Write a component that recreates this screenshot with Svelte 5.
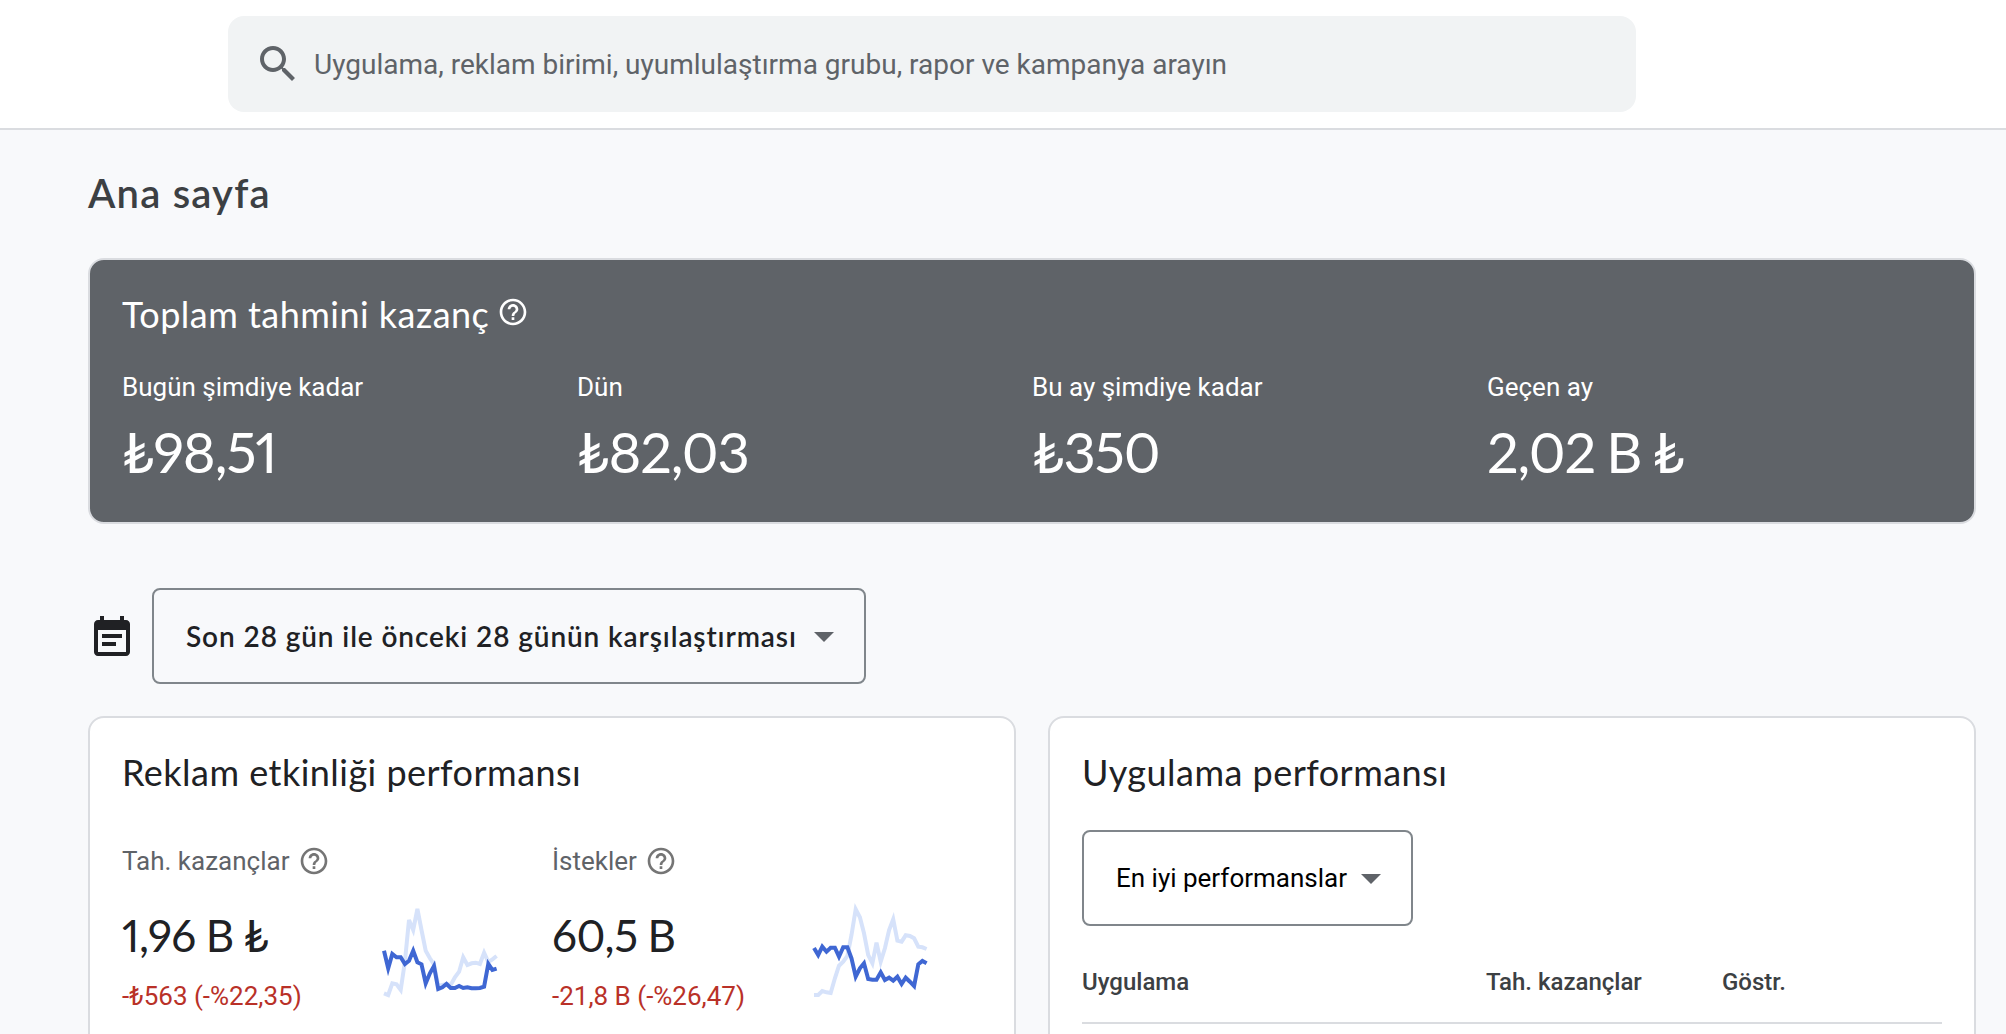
<script lang="ts">
  interface Metric {
    label: string
    value: string
    delta: string
    current: number[]
    previous: number[]
  }

  const totals = [
    { label: 'Bugün şimdiye kadar', value: '₺98,51' },
    { label: 'Dün', value: '₺82,03' },
    { label: 'Bu ay şimdiye kadar', value: '₺350' },
    { label: 'Geçen ay', value: '2,02 B ₺' },
  ]

  const metrics: Metric[] = [
    {
      label: 'Tah. kazançlar',
      value: '1,96 B ₺',
      delta: '-₺563 (-%22,35)',
      current: [138, 85, 128, 118, 118, 98, 108, 138, 103, 97, 40, 70, 92, 23, 28, 38, 26, 26, 32, 26, 28, 25, 25, 26, 30, 98, 80, 84],
      previous: [10, 5, 40, 37, 20, 105, 230, 200, 263, 200, 138, 115, 97, 32, 35, 38, 35, 58, 75, 118, 95, 100, 102, 98, 132, 104, 112, 122],
    },
    {
      label: 'İstekler',
      value: '60,5 B',
      delta: '-21,8 B (-%26,47)',
      current: [146, 125, 150, 135, 147, 147, 120, 148, 148, 115, 60, 85, 100, 53, 51, 51, 73, 50, 57, 48, 60, 38, 57, 45, 32, 97, 107, 100],
      previous: [5, 5, 17, 13, 11, 55, 93, 105, 122, 185, 262, 238, 190, 125, 100, 162, 105, 145, 200, 232, 168, 165, 184, 182, 175, 150, 148, 143],
    },
  ]

  const columns = ['Uygulama', 'Tah. kazançlar', 'Göstr.']

  function points(values: number[]): string {
    return values.map((v, i) => `${(2 + i * 4.17).toFixed(1)},${((290 - v) / 3).toFixed(1)}`).join(' ')
  }
</script>

{#snippet help()}
  <svg class="help" viewBox="0 0 24 24" aria-hidden="true">
    <path d="M11 18h2v-2h-2v2zm1-16C6.48 2 2 6.48 2 12s4.48 10 10 10 10-4.48 10-10S17.52 2 12 2zm0 18c-4.41 0-8-3.59-8-8s3.59-8 8-8 8 3.59 8 8-3.59 8-8 8zm0-14c-2.21 0-4 1.79-4 4h2c0-1.1.9-2 2-2s2 .9 2 2c0 2-3 1.75-3 5h2c0-2.25 3-2.5 3-5 0-2.21-1.79-4-4-4z" />
  </svg>
{/snippet}

{#snippet arrow()}
  <svg class="arrow" viewBox="0 0 24 24" aria-hidden="true"><path d="M7 10l5 5 5-5z" /></svg>
{/snippet}

<div class="page">
  <header>
    <div class="search">
      <svg viewBox="0 0 24 24" aria-hidden="true">
        <path d="M15.5 14h-.79l-.28-.27C15.41 12.59 16 11.11 16 9.5 16 5.91 13.09 3 9.5 3S3 5.91 3 9.5 5.91 16 9.5 16c1.61 0 3.09-.59 4.23-1.57l.27.28v.79l5 4.99L20.49 19l-4.99-5zm-6 0C7.01 14 5 11.99 5 9.5S7.01 5 9.5 5 14 7.01 14 9.5 11.99 14 9.5 14z" />
      </svg>
      <span>Uygulama, reklam birimi, uyumlulaştırma grubu, rapor ve kampanya arayın</span>
    </div>
  </header>

  <main>
    <h1>Ana sayfa</h1>

    <section class="totals">
      <h2><span>Toplam tahmini kazanç</span>{@render help()}</h2>
      <div class="totals-grid">
        {#each totals as total}
          <div>
            <div class="total-label">{total.label}</div>
            <div class="total-value">{total.value}</div>
          </div>
        {/each}
      </div>
    </section>

    <div class="range">
      <svg class="calendar" viewBox="0 0 24 24" aria-hidden="true">
        <path d="M17 10H7v2h10v-2zm2-7h-1V1h-2v2H8V1H6v2H5c-1.11 0-1.99.9-1.99 2L3 19c0 1.1.89 2 2 2h14c1.1 0 2-.9 2-2V5c0-1.1-.9-2-2-2zm0 16H5V8h14v11zm-5-5H7v2h7v-2z" />
      </svg>
      <button class="select range-select">
        <span>Son 28 gün ile önceki 28 günün karşılaştırması</span>{@render arrow()}
      </button>
    </div>

    <div class="cards">
      <section class="card">
        <h2>Reklam etkinliği performansı</h2>
        <div class="metrics">
          {#each metrics as metric}
            <div class="metric">
              <div class="metric-label"><span>{metric.label}</span>{@render help()}</div>
              <div class="metric-body">
                <div>
                  <div class="metric-value">{metric.value}</div>
                  <div class="metric-delta">{metric.delta}</div>
                </div>
                <svg class="spark" viewBox="0 0 118 100" aria-hidden="true">
                  <polyline class="previous" points={points(metric.previous)} />
                  <polyline class="current" points={points(metric.current)} />
                </svg>
              </div>
            </div>
          {/each}
        </div>
      </section>

      <section class="card">
        <h2>Uygulama performansı</h2>
        <button class="select apps-select">
          <span>En iyi performanslar</span>{@render arrow()}
        </button>
        <div class="table-head">
          {#each columns as column}
            <span>{column}</span>
          {/each}
        </div>
      </section>
    </div>
  </main>
</div>

<style>
  :global(body) {
    background: #f8f9fb;
    overflow: hidden;
  }
  .page {
    --display: Lato, 'Open Sans', sans-serif;
    height: 1034px;
    overflow: hidden;
    font-family: Roboto, sans-serif;
    color: #202124;
  }
  svg {
    display: block;
    flex-shrink: 0;
  }
  header {
    box-sizing: border-box;
    height: 130px;
    padding: 16px 0 0 228px;
    background: #fff;
    border-bottom: 2px solid #dadce0;
  }
  .search {
    box-sizing: border-box;
    display: flex;
    align-items: center;
    gap: 12px;
    width: 1408px;
    height: 96px;
    padding: 0 26px;
    border-radius: 16px;
    background: #f1f3f4;
    color: #5f6368;
    font-size: 28px;
    white-space: nowrap;
  }
  .search svg {
    width: 48px;
    height: 48px;
    fill: currentColor;
  }
  main {
    padding: 39px 30px 0 88px;
  }
  h1, h2 {
    margin: 0;
    font-family: var(--display);
    line-height: 48px;
    white-space: nowrap;
  }
  h1 {
    margin-bottom: 41px;
    font-size: 40px;
    font-weight: 600;
    letter-spacing: 1.2px;
    color: #3c4043;
  }
  h2 {
    font-size: 36px;
    font-weight: 400;
    letter-spacing: 0.47px;
  }
  .help {
    width: 32px;
    height: 32px;
    fill: currentColor;
  }
  .totals {
    padding: 30px 32px 39px;
    border: 2px solid #dadce0;
    border-radius: 16px;
    background: #5f6368;
    color: #fff;
  }
  .totals h2 {
    display: flex;
    gap: 8px;
    margin-bottom: 33px;
  }
  .totals .help {
    margin-top: 6px;
  }
  .totals-grid {
    display: grid;
    grid-template-columns: repeat(4, 1fr);
  }
  .total-label {
    margin-bottom: 17px;
    font-size: 26px;
    line-height: 32px;
  }
  .total-value {
    margin-bottom: -1px;
    font-family: var(--display);
    font-size: 56px;
    font-variant-numeric: proportional-nums;
    line-height: 64px;
    letter-spacing: -1.1px;
    word-spacing: -2px;
  }
  .range {
    display: flex;
    align-items: center;
    gap: 16px;
    margin: 64px 0 32px;
  }
  .calendar {
    width: 48px;
    height: 48px;
    margin-top: 4px;
    fill: currentColor;
  }
  .select {
    box-sizing: border-box;
    display: flex;
    align-items: center;
    justify-content: space-between;
    height: 96px;
    padding: 0 16px 0 32px;
    border: 2px solid #80868b;
    border-radius: 8px;
    background: transparent;
    font-family: inherit;
    font-size: 26px;
    color: #000;
    white-space: nowrap;
  }
  .arrow {
    width: 48px;
    height: 48px;
    fill: #5f6368;
  }
  .range-select {
    width: 714px;
    font-family: var(--display);
    font-size: 28px;
    font-weight: 600;
    letter-spacing: 0.9px;
    color: #202124;
  }
  .cards {
    display: grid;
    grid-template-columns: 1fr 1fr;
    gap: 32px;
  }
  .card {
    height: 400px;
    padding: 30px 32px 0;
    border: 2px solid #dadce0;
    border-radius: 16px;
    background: #fff;
  }
  .metrics {
    display: grid;
    grid-template-columns: 1fr 1fr;
    margin-top: 49px;
  }
  .metric-label {
    display: flex;
    gap: 8.5px;
    font-size: 26px;
    line-height: 32px;
    color: #5f6368;
  }
  .metric-label .help {
    fill: #757575;
  }
  .metric-body {
    display: flex;
    justify-content: space-between;
    padding: 23px 52px 0 0;
    white-space: nowrap;
  }
  .metric-value {
    margin-top: 9px;
    font-family: var(--display);
    font-size: 44px;
    font-variant-numeric: proportional-nums;
    line-height: 52px;
    letter-spacing: -0.4px;
    word-spacing: -1px;
  }
  .metric-delta {
    margin-top: 19px;
    font-size: 26px;
    line-height: 32px;
    color: #b93128;
  }
  .spark {
    width: 118px;
    height: 100px;
    fill: none;
    stroke-width: 4;
  }
  .previous {
    stroke: #d6e2fa;
  }
  .current {
    stroke: #3f67d3;
  }
  .apps-select {
    width: 331px;
    margin-top: 34px;
  }
  .table-head {
    display: grid;
    grid-template-columns: 404px 236px 1fr;
    margin-top: 40px;
    padding-bottom: 24px;
    border-bottom: 2px solid #dadce0;
    font-size: 24px;
    font-weight: 500;
    line-height: 32px;
    color: #3c4043;
  }
</style>
